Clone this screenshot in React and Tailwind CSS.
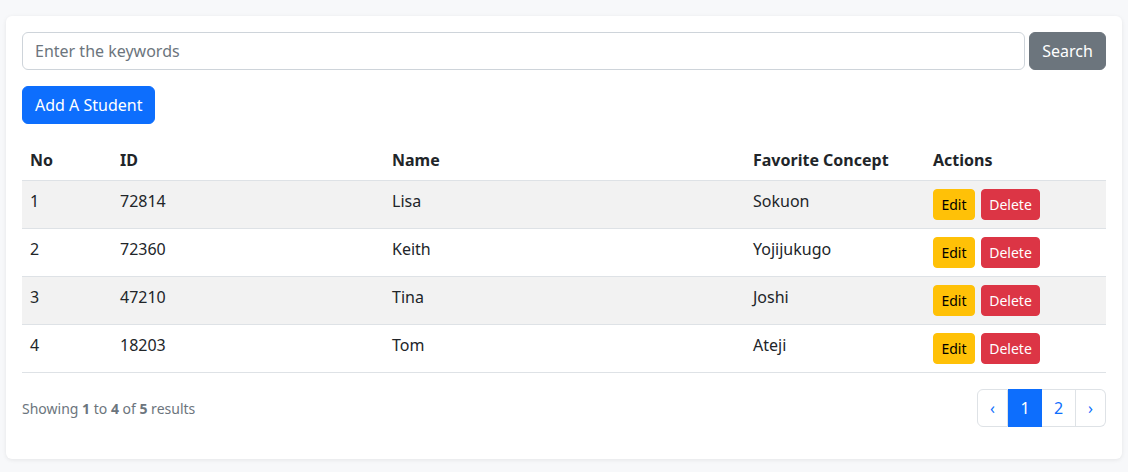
import React from "react";

const rows = [
  { no: 1, id: "72814", name: "Lisa", concept: "Sokuon" },
  { no: 2, id: "72360", name: "Keith", concept: "Yojijukugo" },
  { no: 3, id: "47210", name: "Tina", concept: "Joshi" },
  { no: 4, id: "18203", name: "Tom", concept: "Ateji" },
];

export default function App() {
  return (
    <div
      className="min-h-[472px] bg-[#f7f8fa] px-[6px] pt-4 pb-[13px] text-[#212529]"
      style={{ fontFamily: '"Noto Sans", "Liberation Sans", sans-serif' }}
    >
      <div className="rounded-md bg-white p-4 shadow-[0_1px_4px_rgba(0,0,0,0.08)]">
        <div className="flex gap-[4px]">
          <input
            className="h-[38px] flex-1 rounded-md border border-[#ced4da] bg-white px-3 text-base text-[#212529] outline-none placeholder:text-[#6c757d]"
            placeholder="Enter the keywords"
          />
          <button className="h-[38px] w-[77px] rounded-md border border-[#6c757d] bg-[#6c757d] text-base text-white">
            Search
          </button>
        </div>
        <button className="mt-4 h-[38px] rounded-md border border-[#0d6efd] bg-[#0d6efd] px-3 text-base text-white">
          Add A Student
        </button>
        <table className="mt-4 w-full table-fixed border-collapse text-base">
          <colgroup>
            <col className="w-[90px]" />
            <col className="w-[272px]" />
            <col className="w-[361px]" />
            <col className="w-[180px]" />
            <col />
          </colgroup>
          <thead>
            <tr className="border-b border-[#dee2e6]">
              <th className="p-2 text-left align-bottom font-bold leading-6">No</th>
              <th className="p-2 text-left align-bottom font-bold leading-6">ID</th>
              <th className="p-2 text-left align-bottom font-bold leading-6">Name</th>
              <th className="p-2 text-left align-bottom font-bold leading-6">Favorite Concept</th>
              <th className="p-2 text-left align-bottom font-bold leading-6">Actions</th>
            </tr>
          </thead>
          <tbody>
            {rows.map((r, i) => (
              <tr
                key={r.no}
                className={
                  "border-b border-[#dee2e6] " + (i % 2 === 0 ? "bg-[#f2f2f2]" : "bg-white")
                }
              >
                <td className="p-2 align-top leading-6">{r.no}</td>
                <td className="p-2 align-top leading-6">{r.id}</td>
                <td className="p-2 align-top leading-6">{r.name}</td>
                <td className="p-2 align-top leading-6">{r.concept}</td>
                <td className="p-2 align-top leading-6">
                  <div className="flex gap-[6px]">
                    <button className="h-[31px] w-[42px] rounded-[4px] border border-[#ffc107] bg-[#ffc107] text-sm leading-[21px] text-black">
                      Edit
                    </button>
                    <button className="h-[31px] w-[59px] rounded-[4px] border border-[#dc3545] bg-[#dc3545] text-sm leading-[21px] text-white">
                      Delete
                    </button>
                  </div>
                </td>
              </tr>
            ))}
          </tbody>
        </table>
        <div className="mt-4 mb-4 flex items-center justify-between">
          <div className="pt-[2px] text-sm text-[#6c757d]">
            Showing <span className="font-bold">1</span> to <span className="font-bold">4</span> of{" "}
            <span className="font-bold">5</span> results
          </div>
          <div className="flex h-[38px] text-base">
            <span className="flex w-[31px] items-center justify-center rounded-l-md border border-[#dee2e6] text-[#0d6efd]">
              ‹
            </span>
            <span className="flex w-[34px] items-center justify-center border border-[#0d6efd] bg-[#0d6efd] text-white">
              1
            </span>
            <span className="flex w-[34px] items-center justify-center border border-l-0 border-[#dee2e6] text-[#0d6efd]">
              2
            </span>
            <span className="flex w-[30px] items-center justify-center rounded-r-md border border-l-0 border-[#dee2e6] text-[#0d6efd]">
              ›
            </span>
          </div>
        </div>
      </div>
    </div>
  );
}
